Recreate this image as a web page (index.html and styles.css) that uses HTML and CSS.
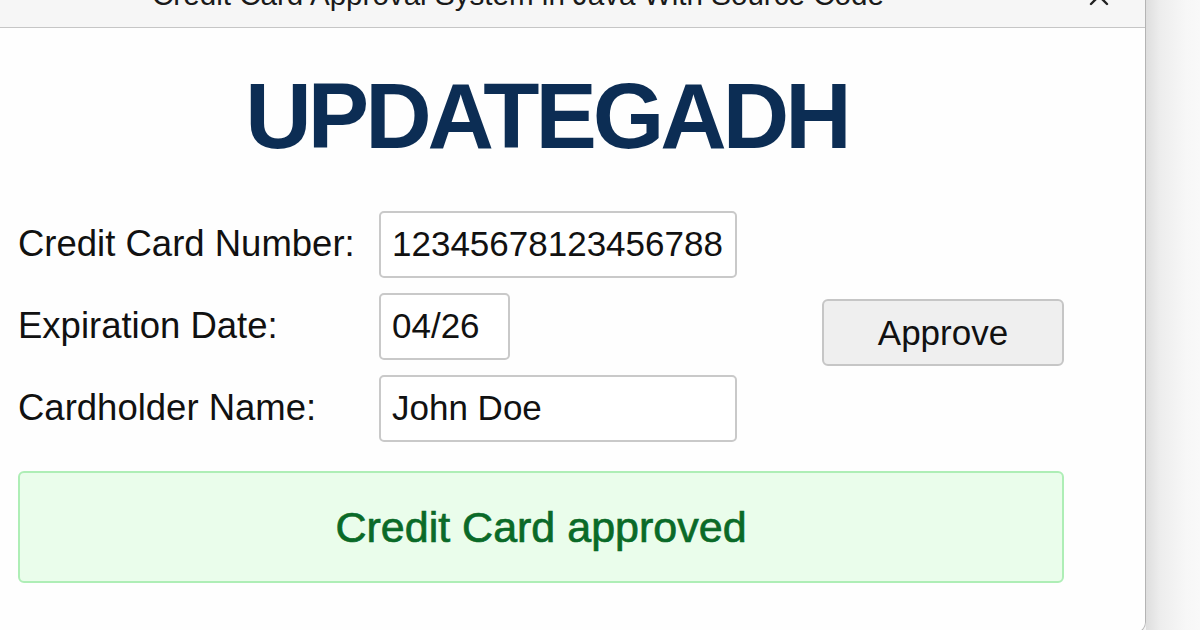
FILE: index.html
```html
<!DOCTYPE html>
<html lang="en">
<head>
<meta charset="utf-8">
<title>Credit Card Approval System</title>
<link rel="stylesheet" href="styles.css">
</head>
<body>
<div class="desktop">
  <div class="window">
    <div class="titlebar">
      <span class="title-text">Credit Card Approval System in Java With Source Code</span>
      <svg class="close" width="22" height="22" viewBox="0 0 22 22" aria-hidden="true">
        <path d="M3 3 L19 19 M19 3 L3 19" stroke="#222" stroke-width="2.4" stroke-linecap="round"/>
      </svg>
    </div>
    <div class="content">
      <h1 class="brand">UPDATEGADH</h1>
      <div class="form">
        <label class="label">Credit Card Number:</label>
        <input class="field field-wide" type="text" value="12345678123456788" readonly>
        <div class="spacer"></div>
        <label class="label">Expiration Date:</label>
        <input class="field field-short" type="text" value="04/26" readonly>
        <button class="approve" type="button">Approve</button>
        <label class="label">Cardholder Name:</label>
        <input class="field field-wide" type="text" value="John Doe" readonly>
        <div class="spacer"></div>
      </div>
      <div class="result">Credit Card approved</div>
    </div>
  </div>
  <div class="backdrop"></div>
</div>
</body>
</html>
```
FILE: styles.css
```css
html, body {
  margin: 0;
  padding: 0;
}
body {
  width: 1200px;
  height: 630px;
  overflow: hidden;
  font-family: "Liberation Sans", Arial, sans-serif;
  background: #f4f4f4;
}
.desktop {
  display: flex;
  width: 1200px;
  height: 630px;
}
.window {
  width: 1146px;
  height: 634px;
  flex: none;
  box-sizing: border-box;
  background: #fefefe;
  border-right: 1px solid #b4b4b4;
  border-bottom: 1px solid #b4b4b4;
  border-bottom-right-radius: 12px;
  overflow: hidden;
}
.backdrop {
  flex: 1;
  background: linear-gradient(to right, #dedede 0px, #ededed 14px, #f7f7f7 40px, #f9f9f9 100%);
}
.titlebar {
  height: 27px;
  background: #f6f6f6;
  border-bottom: 1px solid #c6c6c6;
  display: flex;
  align-items: flex-start;
  overflow: hidden;
}
.title-text {
  margin-left: 152px;
  margin-top: -20px;
  font-size: 29.6px;
  line-height: 1;
  color: #1a1a1a;
  white-space: nowrap;
}
.close {
  margin-left: auto;
  margin-right: 35px;
  margin-top: -15px;
  flex: none;
}
.content {
  padding: 0 81px 0 18px;
}
.brand {
  margin: 42px 0 0;
  padding-left: 11px;
  text-align: center;
  font-size: 92px;
  line-height: 1;
  font-weight: 700;
  letter-spacing: -4px;
  color: #0c2d54;
}
.form {
  margin-top: 49px;
  display: grid;
  grid-template-columns: 361px 358px 1fr;
  grid-auto-rows: 66px;
  row-gap: 16px;
  align-items: center;
}
.label {
  font-size: 36.5px;
  color: #111;
  white-space: nowrap;
}
.field {
  height: 67px;
  box-sizing: border-box;
  border: 2px solid #c9c9c9;
  border-radius: 5px;
  padding: 0 11px;
  font-family: "Liberation Sans", Arial, sans-serif;
  font-size: 35px;
  color: #111;
  background: #fff;
  outline: none;
}
.field-wide {
  width: 358px;
}
.field-short {
  width: 131px;
}
.approve {
  justify-self: end;
  align-self: start;
  margin-top: 6px;
  width: 242px;
  height: 67px;
  background: #efefef;
  border: 2px solid #c6c6c6;
  border-radius: 6px;
  font-family: "Liberation Sans", Arial, sans-serif;
  font-size: 35px;
  color: #111;
  padding: 0;
}
.result {
  margin-top: 30px;
  height: 112px;
  box-sizing: border-box;
  border: 2px solid #aeeeb6;
  border-radius: 6px;
  background: #eafdeb;
  display: flex;
  align-items: center;
  justify-content: center;
  font-size: 43px;
  color: #0a6a28;
  -webkit-text-stroke: 0.7px #0a6a28;
}
```
